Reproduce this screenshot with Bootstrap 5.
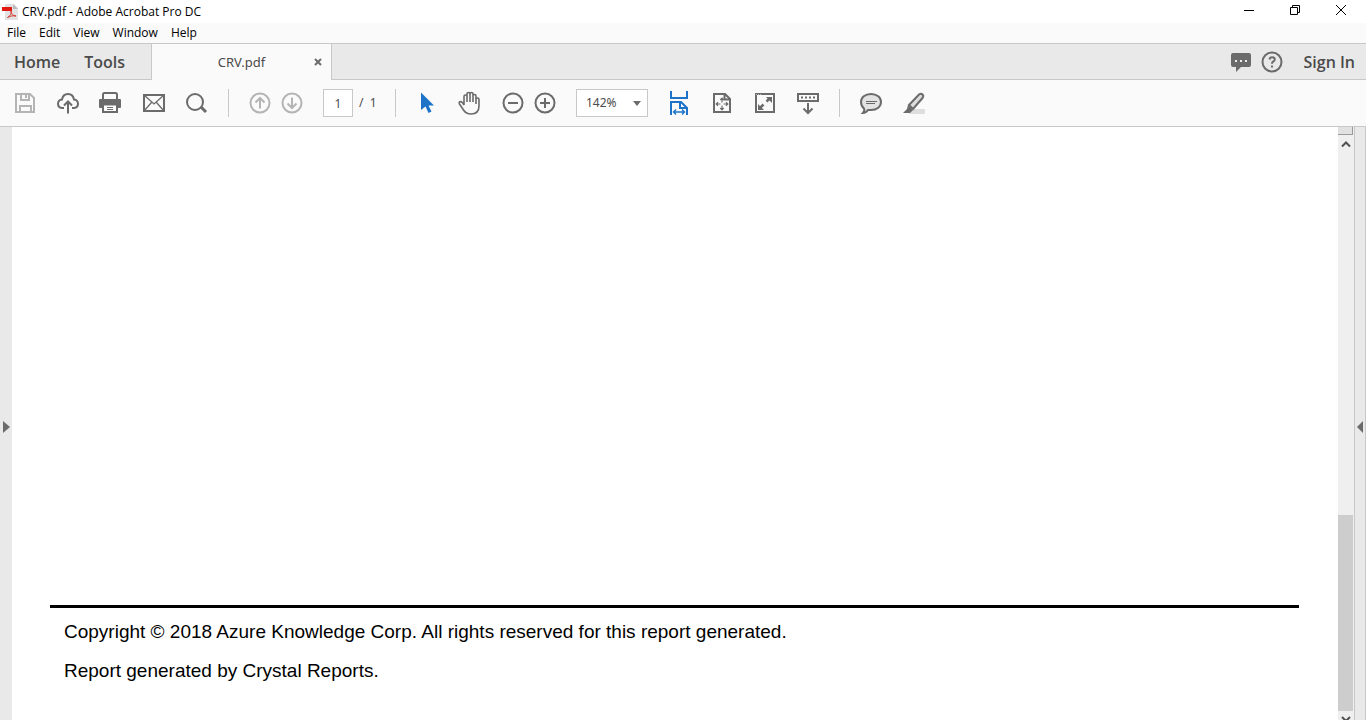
<!DOCTYPE html>
<html lang="en">
<head>
<meta charset="utf-8">
<meta name="viewport" content="width=device-width, initial-scale=1">
<title>CRV.pdf - Adobe Acrobat Pro DC</title>
<link href="https://cdn.jsdelivr.net/npm/bootstrap@5.3.0/dist/css/bootstrap.min.css" rel="stylesheet">
<style>
:root { --edge: #c8c8c8; --chrome: #fafafa; --strip: #e9e9e9; --ink: #6b6b6b; }
body { font-family: "Noto Sans", "Open Sans", sans-serif; font-size: 12px; line-height: 16px; color: #000; background: #fff; }
button { border: 0; padding: 0; background: none; color: var(--ink); }
button svg { display: block; }
a { color: inherit; text-decoration: none; }
svg { fill: none; stroke: currentColor; stroke-width: 2; }
.app-name, .menu-list { font-family: "Open Sans", sans-serif; }
.title-bar { height: 23px; padding: 0 2px; }
.title-bar button { width: 46px; height: 20px; color: #000; }
.title-bar button svg { stroke-width: 1; margin: 0 auto; }
.menu-list { height: 20px; padding-left: 7px; gap: 13px; background: var(--chrome); }
.tab-strip { height: 37px; background: var(--strip); border-top: 1px solid var(--edge); color: #4b4b4b; }
.main-tabs { width: 152px; padding-left: 14px; gap: 24px; border-right: 1px solid var(--edge); border-bottom: 1px solid var(--edge); }
.big-label { font: 600 16px/20px "Open Sans", sans-serif; }
.doc-tab { width: 180px; background: var(--chrome); border-right: 1px solid var(--edge); font-size: 13px; padding: 0 8px 0 18px; }
.tab-tools { border-bottom: 1px solid var(--edge); padding-right: 11px; gap: 9px; }
.sign-in { margin-left: 12px; }
.tool-row { height: 47px; background: var(--chrome); border-bottom: 1px solid var(--edge); padding-left: 11px; gap: 17px; color: #4b4b4b; }
.tool-set { gap: 15px; }
.tool-pair { gap: 4px; }
.tool-rule { width: 1px; height: 28px; background: var(--edge); }
.tool-row button:disabled { color: #b4b4b4; }
.tool-row .picked { color: #1c73c8; }
.page-box { width: 30px; height: 28px; border: 1px solid var(--edge); border-radius: 0; background: #fff; text-align: center; padding: 0; color: inherit; }
.page-count { width: 25px; padding-left: 6px; white-space: pre; }
.zoom-wrap { width: 72px; height: 28px; }
.zoom-box { appearance: none; width: 100%; height: 100%; border: 1px solid var(--edge); border-radius: 0; background: #fff; color: inherit; padding: 0 0 0 9px; }
.zoom-wrap svg { right: 7px; top: 12px; pointer-events: none; }
.side-left, .side-right { width: 12px; padding-top: 7px; background: var(--strip); }
.side-right { border-left: 1px solid var(--edge); border-right: 1px solid var(--edge); }
.side-left svg, .side-right svg { fill: #6b6b6b; stroke: none; }
.sheet { padding: 0 39px 37px 38px; min-width: 0; }
.sheet-foot { border-top: 3px solid #000; padding: 12px 0 0 14px; font: 19px/24px "Liberation Sans", sans-serif; }
.sheet-foot p { margin: 0 0 15px; }
.sheet-foot p:last-child { margin: 0; }
.scroll-track { width: 16px; background: #efefef; padding-right: 1px; }
.split-box { height: 8px; background: #e1e1e1; border-bottom: 1px solid #999; border-right: 1px solid #999; }
.scroll-track button { height: 18px; color: #505050; }
.scroll-space { flex: 362 0 0; }
.scroll-thumb { flex: 196 0 0; background: #cdcdcd; }
.scroll-track .scroll-end { height: 9px; overflow: hidden; }
</style>
</head>
<body class="vh-100 d-flex flex-column overflow-hidden">
<header>
  <div class="title-bar d-flex align-items-center">
    <svg width="16" height="18"><path d="M3 1h9l4 4v12H3z" fill="#e2e2e2" stroke="none"/><path d="M11 1l5 5h-5z" fill="#bbb" stroke="none"/><path d="M0 4h10v4H0z" fill="#e01810" stroke="none"/><path d="M5.500 14.500c3-1.500 4-4 3.500-7 0 3.500 2 5.500 5 5.500-3-.5-6 0-8.500 1.500z" stroke="#d43a32" stroke-width="1"/></svg>
    <span class="app-name ms-1">CRV.pdf - Adobe Acrobat Pro DC</span>
    <div class="d-flex ms-auto align-self-start">
      <button aria-label="Minimize"><svg width="12" height="12"><path d="M1 6.500h10"/></svg></button>
      <button aria-label="Restore"><svg width="12" height="12"><path d="M1.500 3.500h7v7h-7zM3.500 3.500v-2h7v7h-2"/></svg></button>
      <button aria-label="Close"><svg width="12" height="12"><path d="M1 1l10 10M11 1L1 11"/></svg></button>
    </div>
  </div>
  <nav class="menu-list d-flex align-items-center" aria-label="Menu">
    <a href="#">File</a><a href="#">Edit</a><a href="#">View</a><a href="#">Window</a><a href="#">Help</a>
  </nav>
  <div class="tab-strip d-flex">
    <nav class="main-tabs d-flex align-items-center big-label" aria-label="Views"><a href="#">Home</a><a href="#">Tools</a></nav>
    <div class="doc-tab d-flex align-items-center">
      <span class="flex-fill text-center">CRV.pdf</span>
      <button aria-label="Close tab"><svg width="10" height="10"><path d="M2 2l6 6M8 2L2 8"/></svg></button>
    </div>
    <div class="tab-tools flex-fill d-flex align-items-center justify-content-end">
      <button aria-label="Notifications"><svg width="22" height="22"><path d="M3 2h16q2 0 2 2v10q0 2-2 2h-8l-5 5v-5H3q-2 0-2-2V4q0-2 2-2z" fill="currentColor" stroke="none"/><path d="M5 10h2m3 0h2m3 0h2" stroke="#eee"/></svg></button>
      <button aria-label="Help"><svg width="22" height="22"><circle cx="11" cy="11" r="9.500"/><path d="M8.500 8.500q.3-2.200 2.700-2.200 2.500 0 2.500 2.100 0 1.300-1.400 2.100-1.300.7-1.300 2.200M11 14.500v2"/></svg></button>
      <a href="#" class="big-label sign-in">Sign In</a>
    </div>
  </div>
  <div class="tool-row d-flex align-items-center" role="toolbar" aria-label="Document tools">
    <div class="tool-set d-flex">
      <button disabled aria-label="Save"><svg width="28" height="28"><path d="M5 5h14l4 4v14H5z"/><path d="M10 5v6h8V5M15 6v3M9 23v-6h11v6"/></svg></button>
      <button aria-label="Upload"><svg width="28" height="28"><path d="M10 19H8q-4-.3-4-4.200Q4 11 8 10.500 9 5 14 5t6 5.500q4 .5 4 4.300 0 3.900-4 4.200h-2M14 24.500V13M10 16.500l4-4 4 4"/></svg></button>
      <button aria-label="Print"><svg width="28" height="28"><path d="M6 11V5.500q0-1.500 1.500-1.500h11Q20 4 20 5.500V11"/><path d="M3 10h20q1 0 1 1v7q0 1-1 1H3q-1 0-1-1v-7q0-1 1-1z" fill="currentColor" stroke="none"/><path d="M6 15.500h14V23H6z" fill="#fff"/><path d="M10 18.500h6m-6 2h6" stroke-width="1"/></svg></button>
      <button aria-label="Email"><svg width="28" height="28"><path d="M4 6h20v16H4z"/><path d="M4 6l10 9L24 6M4 22l7.500-8.500M24 22l-7.500-8.500" stroke-width="1.300"/></svg></button>
      <button aria-label="Find"><svg width="28" height="28"><circle cx="12" cy="13" r="8"/><path d="M18 18l5 5" stroke-width="3"/></svg></button>
    </div>
    <div class="tool-rule"></div>
    <div class="tool-pair d-flex">
      <button disabled aria-label="Previous page"><svg width="28" height="28"><circle cx="14" cy="14" r="9.500"/><path d="M14 19.500V10M9.500 13.500L14 9l4.500 4.500"/></svg></button>
      <button disabled aria-label="Next page"><svg width="28" height="28"><circle cx="14" cy="14" r="9.500"/><path d="M14 8.500V18M9.500 14.500L14 19l4.500-4.500"/></svg></button>
    </div>
    <div class="d-flex align-items-center">
      <input class="page-box" aria-label="Page number" value="1">
      <span class="page-count">/  1</span>
    </div>
    <div class="tool-rule"></div>
    <div class="tool-set d-flex">
      <button class="picked" aria-label="Select"><svg width="28" height="28"><path d="M8 3.500v17.500l4.500-3.500 3 6.500 3-1.500-3-6H21z" fill="currentColor" stroke="none"/></svg></button>
      <button aria-label="Hand"><svg width="28" height="28"><path d="M8 16V7.500q0-1.500 1.400-1.500T11 7.500V13M11 13V5q0-1.500 1.500-1.500T14 5v8M14 13V5q0-1.500 1.500-1.500T17 5v8M17 13V7q0-1.500 1.500-1.500T20 7v8M20 13v-2.500q0-1.500 1.500-1.500T23 10.500V17q0 8-8 8-5 0-7.500-4L3.500 15q-.8-1.500.5-2.200 1.200-.6 2.200.6L8 16" stroke-width="1.600"/></svg></button>
      <div class="tool-pair d-flex">
        <button aria-label="Zoom out"><svg width="28" height="28"><circle cx="14" cy="14" r="9.500"/><path d="M9 14h10"/></svg></button>
        <button aria-label="Zoom in"><svg width="28" height="28"><circle cx="14" cy="14" r="9.500"/><path d="M9 14h10M14 9v10"/></svg></button>
      </div>
    </div>
    <div class="zoom-wrap position-relative">
      <select class="zoom-box" aria-label="Zoom level"><option>142%</option></select>
      <svg class="position-absolute" width="8" height="5"><path d="M0 0h8L4 5z" fill="#6b6b6b" stroke="none"/></svg>
    </div>
    <div class="tool-set d-flex">
      <button class="picked" aria-label="Fit width"><svg width="28" height="28"><path d="M6 2v7h16V2M6 26V13h10l6 6v7M15 13v6h6"/><path d="M9 23h10m-8-2.500L8.500 23l2.500 2.500m6-5l2.500 2.500-2.500 2.500" stroke-width="1.400"/></svg></button>
      <button aria-label="Fit page"><svg width="28" height="28"><path d="M6 5h11l5 5v13H6zM16.500 5v5.500H22"/><path d="M14 9.500v4m0 3v4M8.500 15h4m3 0h4M12.300 11L14 9.200l1.700 1.800m-3.400 8l1.700 1.800 1.700-1.800M10 13.300L8.200 15l1.800 1.700m8-3.400l1.800 1.700-1.800 1.700" stroke-width="1.200"/></svg></button>
      <button aria-label="Full screen"><svg width="28" height="28"><path d="M5 5h18v18H5z"/><path d="M5 5.500h6" stroke-dasharray="1 1" stroke="#bbb" stroke-width="1"/><path d="M15 8h6v6zM7 15v6h6z" fill="currentColor" stroke="none"/><path d="M9 19l3.500-3.500M15.500 12.500L19 9" stroke-width="2.500"/></svg></button>
      <button aria-label="Scrolling mode"><svg width="28" height="28"><path d="M4 5h20v7H4z"/><path d="M7 8.500h14" stroke-dasharray="2 2"/><path d="M14 14v10M9.500 19.500L14 24l4.500-4.500"/></svg></button>
    </div>
    <div class="tool-rule"></div>
    <div class="tool-set d-flex">
      <button aria-label="Comment"><svg width="28" height="28"><path d="M14 5c6 0 10 3.500 10 8s-4 8-10 8l-3 0q-2 3-5 3 2-2 1-4.500Q4 17 4 13c0-4.500 4-8 10-8z" fill="#e3e3e3"/><path d="M9 12.500h11M9 14.500h9" stroke-width="1"/></svg></button>
      <button aria-label="Highlight"><svg width="28" height="28"><path d="M9 20h16v5H9z" fill="#dedede" stroke="none"/><path d="M9 16L19 5.500q2-1.500 3.500 0t0 3.500L13 20z" fill="#ddd"/><path d="M8 16l5 5-3 3H3l4-4z" fill="currentColor" stroke="none"/></svg></button>
    </div>
  </div>
</header>
<main class="d-flex flex-fill">
  <button class="side-left d-flex align-items-center" aria-label="Show navigation pane"><svg class="ms-auto" width="9" height="12"><path d="M0 0l7 6-7 6z"/></svg></button>
  <article class="sheet flex-fill d-flex flex-column justify-content-end">
    <footer class="sheet-foot">
      <p>Copyright © 2018 Azure Knowledge Corp. All rights reserved for this report generated.</p>
      <p>Report generated by Crystal Reports.</p>
    </footer>
  </article>
  <div class="scroll-track d-flex flex-column">
    <div class="split-box"></div>
    <button aria-label="Scroll up"><svg class="mx-auto" width="10" height="8"><path d="M1 6.500l4-4 4 4"/></svg></button>
    <div class="scroll-space"></div>
    <div class="scroll-thumb"></div>
    <button class="scroll-end d-flex align-items-end" aria-label="Scroll down"><svg class="mx-auto" width="10" height="4"><path d="M1 1l4 4 4-4"/></svg></button>
  </div>
  <button class="side-right d-flex align-items-center" aria-label="Show tools pane"><svg width="9" height="12"><path d="M8 0L2 6l6 6z"/></svg></button>
</main>
<script src="https://cdn.jsdelivr.net/npm/bootstrap@5.3.0/dist/js/bootstrap.bundle.min.js"></script>
</body>
</html>
